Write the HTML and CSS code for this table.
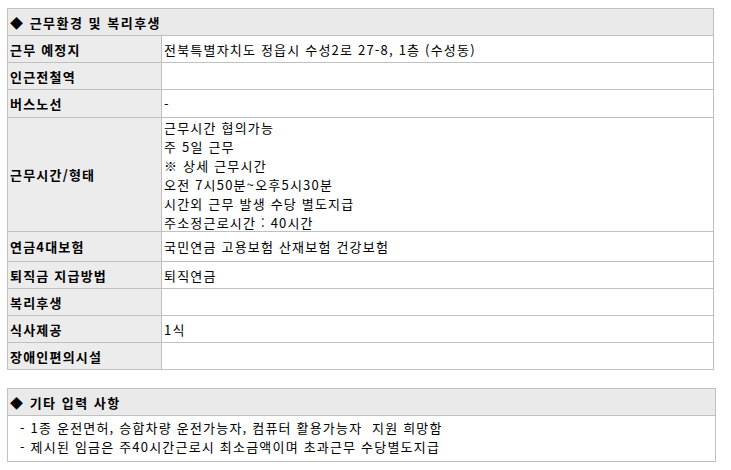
FILE: index.html
```html
<!DOCTYPE html>
<html lang="ko">
<head>
<meta charset="utf-8">
<link rel="stylesheet" href="styles.css">
</head>
<body>
<div class="page">
  <div class="info">
    <div class="head">◆ 근무환경 및 복리후생</div>
    <div class="label">근무 예정지</div><div class="value">전북특별자치도 정읍시 수성2로 27-8, 1층 (수성동)</div>
    <div class="label">인근전철역</div><div class="value"></div>
    <div class="label r28">버스노선</div><div class="value r28">-</div>
    <div class="label r114">근무시간/형태</div>
    <div class="value r114 multi">
      <div>근무시간 협의가능</div>
      <div>주 5일 근무</div>
      <div>※ 상세 근무시간</div>
      <div>오전 7시50분~오후5시30분</div>
      <div>시간외 근무 발생 수당 별도지급</div>
      <div>주소정근로시간 : 40시간</div>
    </div>
    <div class="label r30">연금4대보험</div><div class="value r30">국민연금 고용보험 산재보험 건강보험</div>
    <div class="label">퇴직금 지급방법</div><div class="value">퇴직연금</div>
    <div class="label">복리후생</div><div class="value"></div>
    <div class="label">식사제공</div><div class="value">1식</div>
    <div class="label">장애인편의시설</div><div class="value"></div>
  </div>

  <div class="etc">
    <div class="head">◆ 기타 입력 사항</div>
    <div class="etc-body">
      <div>- 1종 운전면허, 승합차량 운전가능자, 컴퓨터 활용가능자&nbsp; 지원 희망함</div>
      <div>- 제시된 임금은 주40시간근로시 최소금액이며 초과근무 수당별도지급</div>
    </div>
  </div>
</div>
</body>
</html>
```

FILE: styles.css
```css
* { box-sizing: border-box; }
body {
  margin: 0;
  background: #fff;
  color: #000;
  font-family: "Noto Sans CJK KR", "Noto Sans", sans-serif;
  font-size: 13px;
  letter-spacing: 1.2px;
}
.page {
  padding: 8px 0 0 7px;
  display: flex;
  flex-direction: column;
  gap: 18px;
}
.info {
  display: grid;
  grid-template-columns: 154px 552px;
  width: 707px;
  border-top: 1px solid #c0c0c0;
  border-left: 1px solid #c0c0c0;
}
.head {
  grid-column: 1 / -1;
  height: 27px;
  background: #eaeaea;
  border-right: 1px solid #c0c0c0;
  border-bottom: 1px solid #c0c0c0;
  font-size: 13px;
  font-weight: bold;
  letter-spacing: 1.5px;
  padding-left: 2px;
  display: flex;
  align-items: center;
}
.label, .value {
  height: 27px;
  border-right: 1px solid #c0c0c0;
  border-bottom: 1px solid #c0c0c0;
  display: flex;
  align-items: center;
  white-space: nowrap;
}
.label {
  background: #ececec;
  font-weight: bold;
  padding-left: 2px;
}
.value {
  padding-left: 2px;
}
.r28 { height: 28px; }
.r30 { height: 30px; }
.r114 { height: 114px; }
.multi {
  flex-direction: column;
  align-items: flex-start;
  justify-content: flex-start;
  line-height: 19px;
}
.etc {
  width: 709px;
  border: 1px solid #c0c0c0;
}
.etc .head {
  border-right: 0;
  height: 27px;
}
.etc-body {
  line-height: 19px;
  padding: 2px 0 5px 12px;
  white-space: nowrap;
}
```
